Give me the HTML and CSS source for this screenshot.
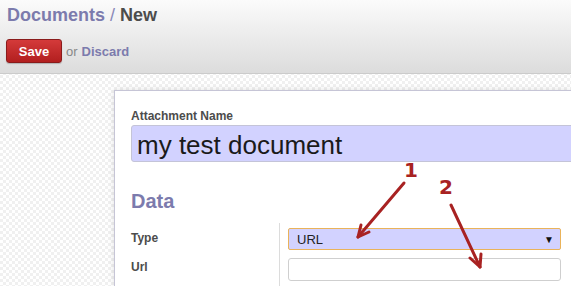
FILE: index.html
```html
<!DOCTYPE html>
<html lang="en">
<head>
    <meta charset="UTF-8">
    <title>Documents / New</title>
    <link rel="stylesheet" href="styles.css">
</head>
<body>
    <div class="header">
        <div class="crumbs"><a class="crumb">Documents</a> <span class="sep">/</span> <b class="current">New</b></div>
        <div class="buttons">
            <button type="button" class="btn-save">Save</button>
            <span class="or">or</span>
            <a class="discard">Discard</a>
        </div>
    </div>

    <div class="content">
        <div class="sheet">
            <label class="lbl">Attachment Name</label>
            <div class="name-input">my test document</div>

            <h2 class="group-title">Data</h2>
            <div class="form-grid">
                <div class="labels">
                    <div class="row-label">Type</div>
                    <div class="row-label">Url</div>
                </div>
                <div class="fields">
                    <div class="select">URL<span class="caret">&#9660;</span></div>
                    <div class="text-input"></div>
                </div>
            </div>
        </div>
    </div>

    <!-- annotation arrows -->
    <div class="note note1">1</div>
    <div class="note note2">2</div>
    <svg class="arrows" width="571" height="286" viewBox="0 0 571 286">
        <g stroke="#a82222" stroke-width="3" fill="none" stroke-linecap="round" stroke-linejoin="round">
            <path d="M404 183 L358 237"/>
            <path d="M358 237 L361 225 M358 237 L369 232"/>
            <path d="M451 205 L480 267"/>
            <path d="M480 267 L470 258 M480 267 L481 254"/>
        </g>
    </svg>
</body>
</html>
```

FILE: styles.css
```css
body{
    margin: 0;
    width: 571px;
    height: 286px;
    overflow: hidden;
    position: relative;
    font-family: "Liberation Sans", Arial, sans-serif;
    color: #4c4c4c;
    background-color: #fff;
    background-image:
        linear-gradient(45deg, #f0f0f0 25%, transparent 25%, transparent 75%, #f0f0f0 75%),
        linear-gradient(45deg, #f0f0f0 25%, transparent 25%, transparent 75%, #f0f0f0 75%);
    background-size: 6px 6px;
    background-position: 0 0, 3px 3px;
}

.header{
    height: 74px;
    border-bottom: 1px solid #cbcbcb;
    background: linear-gradient(#fbfbfb, #dcdcdc);
    padding-left: 7px;
    box-sizing: border-box;
}
.crumbs{
    padding-top: 5px;
    font-size: 18px;
    font-weight: bold;
    height: 34px;
}
.crumb{ color: #7c7bad; }
.sep{ color: #8a89b8; font-weight: normal; }
.current{ color: #4c4c4c; }

.buttons{
    display: flex;
    align-items: center;
    font-size: 13px;
    margin-left: -1px;
}
.btn-save{
    width: 56px;
    height: 24px;
    border: 1px solid #8a1b1b;
    border-radius: 3px;
    background: linear-gradient(#d43a3a, #b21f1f);
    color: #fff;
    font-family: "Liberation Sans", Arial, sans-serif;
    font-size: 13px;
    font-weight: bold;
    padding: 0;
    box-shadow: 0 1px 1px rgba(0,0,0,0.2);
}
.or{
    color: #888;
    margin-left: 4px;
}
.discard{
    color: #7c7bad;
    font-weight: bold;
    margin-left: 4px;
}

.content{
    padding: 16px 0 0 114px;
}
.sheet{
    box-sizing: border-box;
    width: 457px;
    height: 196px;
    overflow: hidden;
    background: #fff;
    border: 1px solid #c6c5d6;
    border-right: none;
    border-bottom: none;
    box-shadow: 0 0 6px rgba(0,0,0,0.12);
    padding: 18px 0 0 16px;
}
.lbl{
    display: block;
    font-size: 12px;
    font-weight: bold;
    color: #4c4c4c;
    height: 16px;
}
.name-input{
    width: 460px;
    height: 37px;
    box-sizing: border-box;
    background: #d2d2ff;
    border: 1px solid #c4c4d8;
    border-radius: 3px;
    font-size: 26px;
    line-height: 38px;
    padding-left: 5px;
    color: #1a1a1a;
}
.group-title{
    margin: 27px 0 0 0;
    font-size: 20px;
    color: #7c7bad;
    height: 24px;
    line-height: 24px;
}
.form-grid{
    display: flex;
    margin-top: 10px;
}
.labels{
    width: 148px;
    border-right: 1px solid #dcdcdc;
    padding-top: 8px;
    height: 70px;
}
.row-label{
    font-size: 12px;
    font-weight: bold;
    height: 29px;
}
.fields{
    padding-left: 8px;
    padding-top: 5px;
}
.select{
    width: 273px;
    height: 22px;
    box-sizing: border-box;
    background: #d2d2ff;
    border: 1px solid #eab35a;
    border-radius: 2px;
    font-size: 13px;
    line-height: 22px;
    padding-left: 8px;
    color: #222;
    position: relative;
}
.caret{
    position: absolute;
    right: 6px;
    top: 0;
    font-size: 10px;
    color: #111;
}
.text-input{
    width: 273px;
    height: 23px;
    box-sizing: border-box;
    margin-top: 8px;
    border: 1px solid #cfcfcf;
    border-radius: 3px;
    background: #fff;
}

.note{
    position: absolute;
    font-family: "DejaVu Sans", sans-serif;
    font-weight: bold;
    font-size: 20px;
    color: #a82222;
}
.note1{ left: 404px; top: 158px; }
.note2{ left: 439px; top: 175px; }
.arrows{
    position: absolute;
    left: 0;
    top: 0;
}
```
